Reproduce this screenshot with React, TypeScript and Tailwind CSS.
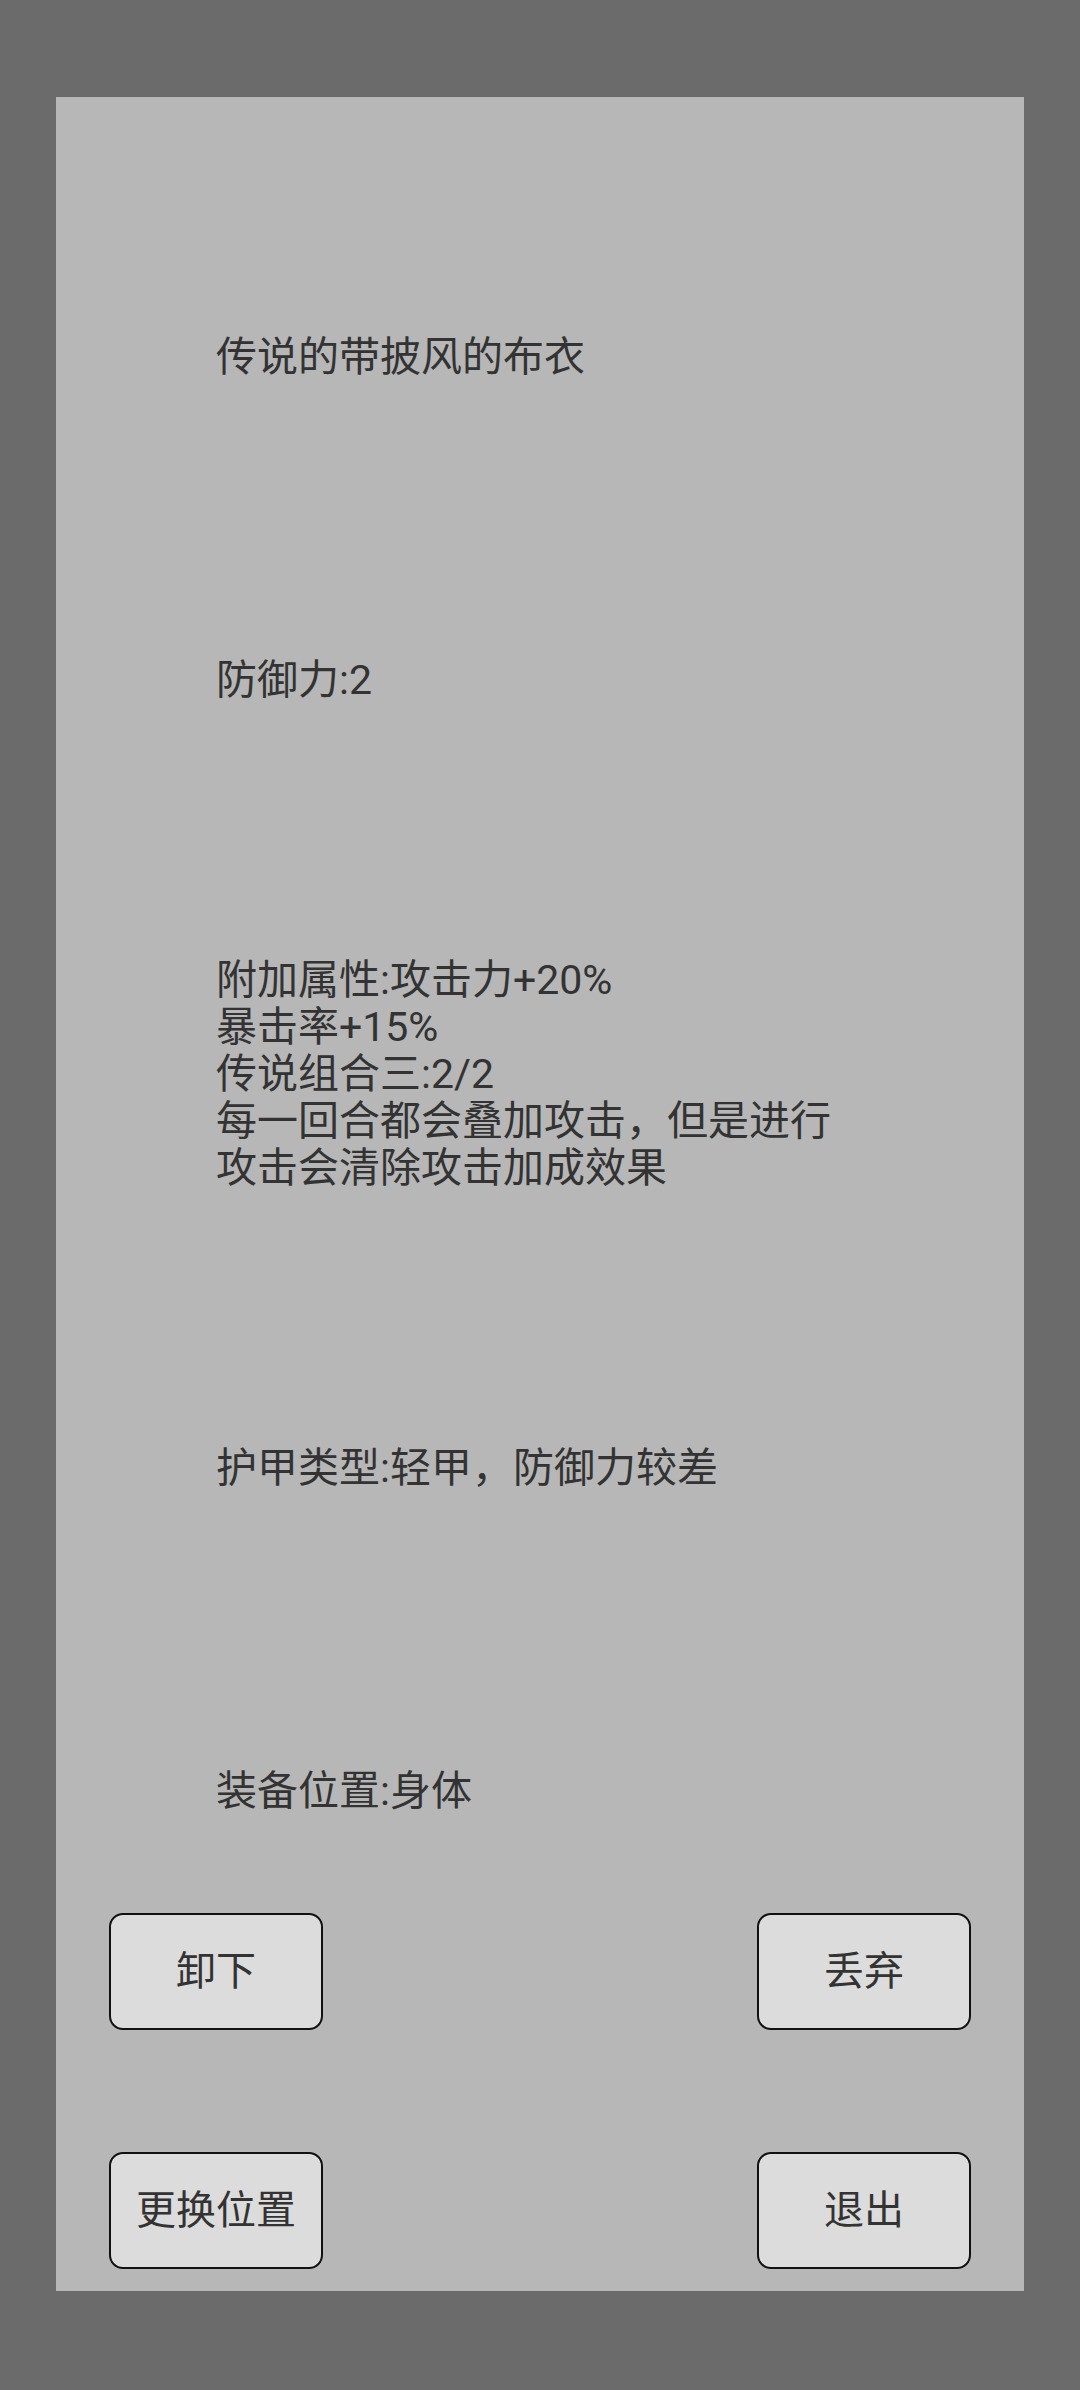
export default function App() {
  const font = { fontFamily: 'Roboto, "Noto Sans CJK SC", sans-serif' };
  return (
    <div className="w-[1080px] h-[2390px] bg-[#6b6b6b] pt-[97px] pl-[56px]" style={font}>
      <div className="w-[968px] h-[2194px] bg-[#b7b7b7] flex flex-col text-[41px] leading-[47px] text-[#333333]">
        <div className="pl-[160px] pt-[237px]">传说的带披风的布衣</div>
        <div className="pl-[160px] mt-[276px]">防御力:2</div>
        <div className="pl-[160px] mt-[253px]">
          <div>附加属性:攻击力+20%</div>
          <div>暴击率+15%</div>
          <div>传说组合三:2/2</div>
          <div>每一回合都会叠加攻击，但是进行</div>
          <div>攻击会清除攻击加成效果</div>
        </div>
        <div className="pl-[160px] mt-[253px]">护甲类型:轻甲，防御力较差</div>
        <div className="pl-[160px] mt-[276px]">装备位置:身体</div>
        <div className="px-[53px] mt-[98px] grid grid-cols-2 gap-y-[122px]">
          {["卸下", "丢弃", "更换位置", "退出"].map((t, i) => (
            <button
              key={t}
              className={`w-[214px] h-[117px] rounded-[14px] border-2 border-[#111111] bg-[#dcdcdc] text-[#333333] text-[40px] flex items-center justify-center ${i % 2 === 1 ? "justify-self-end" : ""}`}
            >
              {t}
            </button>
          ))}
        </div>
      </div>
    </div>
  );
}
